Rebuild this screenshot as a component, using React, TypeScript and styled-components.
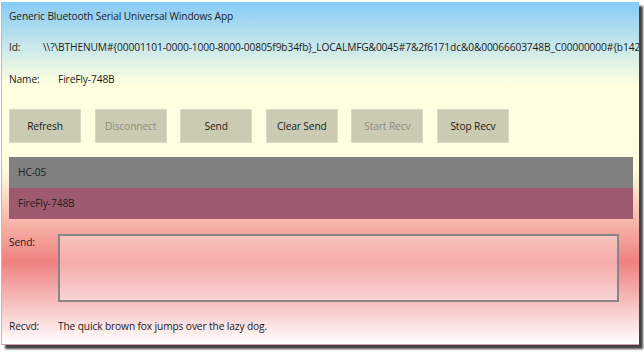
import styled, { createGlobalStyle } from "styled-components";

const GlobalStyle = createGlobalStyle`
  html, body {
    margin: 0;
    padding: 0;
    background: #ffffff;
  }
  body {
    font-family: "Open Sans", "Noto Sans", sans-serif;
    font-size: 10.2px;
    letter-spacing: -0.12px;
    color: #1b1b1b;
  }
`;

const Desktop = styled.div`
  width: 644px;
  height: 353px;
  padding: 2px 0 0 1px;
  box-sizing: border-box;
  overflow: hidden;
`;

const AppWindow = styled.main`
  width: 638px;
  height: 343px;
  box-sizing: border-box;
  border-left: 1px solid #e7a4b4;
  border-bottom: 1px solid #dd9aae;
  padding: 0 0 0 7px;
  display: flex;
  flex-direction: column;
  overflow: hidden;
  background: linear-gradient(
    to bottom,
    #87cbf6 0%,
    #ffffe0 24%,
    #fffde0 49%,
    #f08080 76%,
    #ffffff 100%
  );
  box-shadow: 4px 4px 2px rgba(20, 20, 20, 0.8);
`;

const Title = styled.h1`
  margin: 6px 0 0 0;
  font-size: 10.2px;
  font-weight: 400;
  line-height: 16px;
`;

const InfoRow = styled.div<{ $top: number; $labelWidth: number }>`
  display: flex;
  margin-top: ${({ $top }) => $top}px;
  line-height: 16px;
  white-space: nowrap;
  overflow: hidden;

  & > span:first-child {
    flex: 0 0 ${({ $labelWidth }) => $labelWidth}px;
  }
`;

const Toolbar = styled.div`
  display: flex;
  gap: 13.6px;
  margin-top: 22px;
`;

const Button = styled.button<{ $disabled?: boolean }>`
  width: 72px;
  height: 34px;
  box-sizing: border-box;
  border: 1px solid #d9d9c6;
  background: #cbcab3;
  font-family: inherit;
  font-size: inherit;
  letter-spacing: inherit;
  color: ${({ $disabled }) => ($disabled ? "#8d8d82" : "#1b1b1b")};
  padding: 0;
  cursor: default;
`;

const DeviceList = styled.ul`
  list-style: none;
  margin: 14px 0 0 0;
  padding: 0;
  width: 624px;
`;

const DeviceItem = styled.li<{ $selected?: boolean }>`
  height: 31px;
  line-height: 31px;
  padding-left: 9px;
  background: ${({ $selected }) => ($selected ? "#9e5b6f" : "#808080")};
  color: #1e1e1e;
`;

const SendRow = styled.div`
  display: flex;
  margin-top: 15px;
`;

const Label = styled.span`
  flex: 0 0 49px;
  line-height: 16px;
`;

const SendBox = styled.textarea`
  width: 561px;
  height: 68px;
  box-sizing: border-box;
  border: 2px solid #878787;
  background: rgba(255, 255, 255, 0.35);
  resize: none;
  font-family: inherit;
  font-size: inherit;
  outline: none;
`;

const RecvRow = styled.div`
  display: flex;
  margin-top: 16px;
  line-height: 16px;
`;

const buttons = [
  { label: "Refresh" },
  { label: "Disconnect", disabled: true },
  { label: "Send" },
  { label: "Clear Send" },
  { label: "Start Recv", disabled: true },
  { label: "Stop Recv" },
];

const deviceId =
  "\\\\?\\BTHENUM#{00001101-0000-1000-8000-00805f9b34fb}_LOCALMFG&0045#7&2f6171dc&0&00066603748B_C00000000#{b142fc3e-fa4e-460b-8abc-072b628b3c70}";

export default function App() {
  return (
    <>
      <GlobalStyle />
      <Desktop>
        <AppWindow>
          <Title>Generic Bluetooth Serial Universal Windows App</Title>
          <InfoRow $top={15} $labelWidth={34}>
            <span>Id:</span>
            <span>{deviceId}</span>
          </InfoRow>
          <InfoRow $top={16} $labelWidth={49}>
            <span>Name:</span>
            <span>FireFly-748B</span>
          </InfoRow>
          <Toolbar>
            {buttons.map((b) => (
              <Button key={b.label} $disabled={b.disabled}>
                {b.label}
              </Button>
            ))}
          </Toolbar>
          <DeviceList>
            <DeviceItem>HC-05</DeviceItem>
            <DeviceItem $selected>FireFly-748B</DeviceItem>
          </DeviceList>
          <SendRow>
            <Label>Send:</Label>
            <SendBox />
          </SendRow>
          <RecvRow>
            <Label>Recvd:</Label>
            <span>The quick brown fox jumps over the lazy dog.</span>
          </RecvRow>
        </AppWindow>
      </Desktop>
    </>
  );
}
